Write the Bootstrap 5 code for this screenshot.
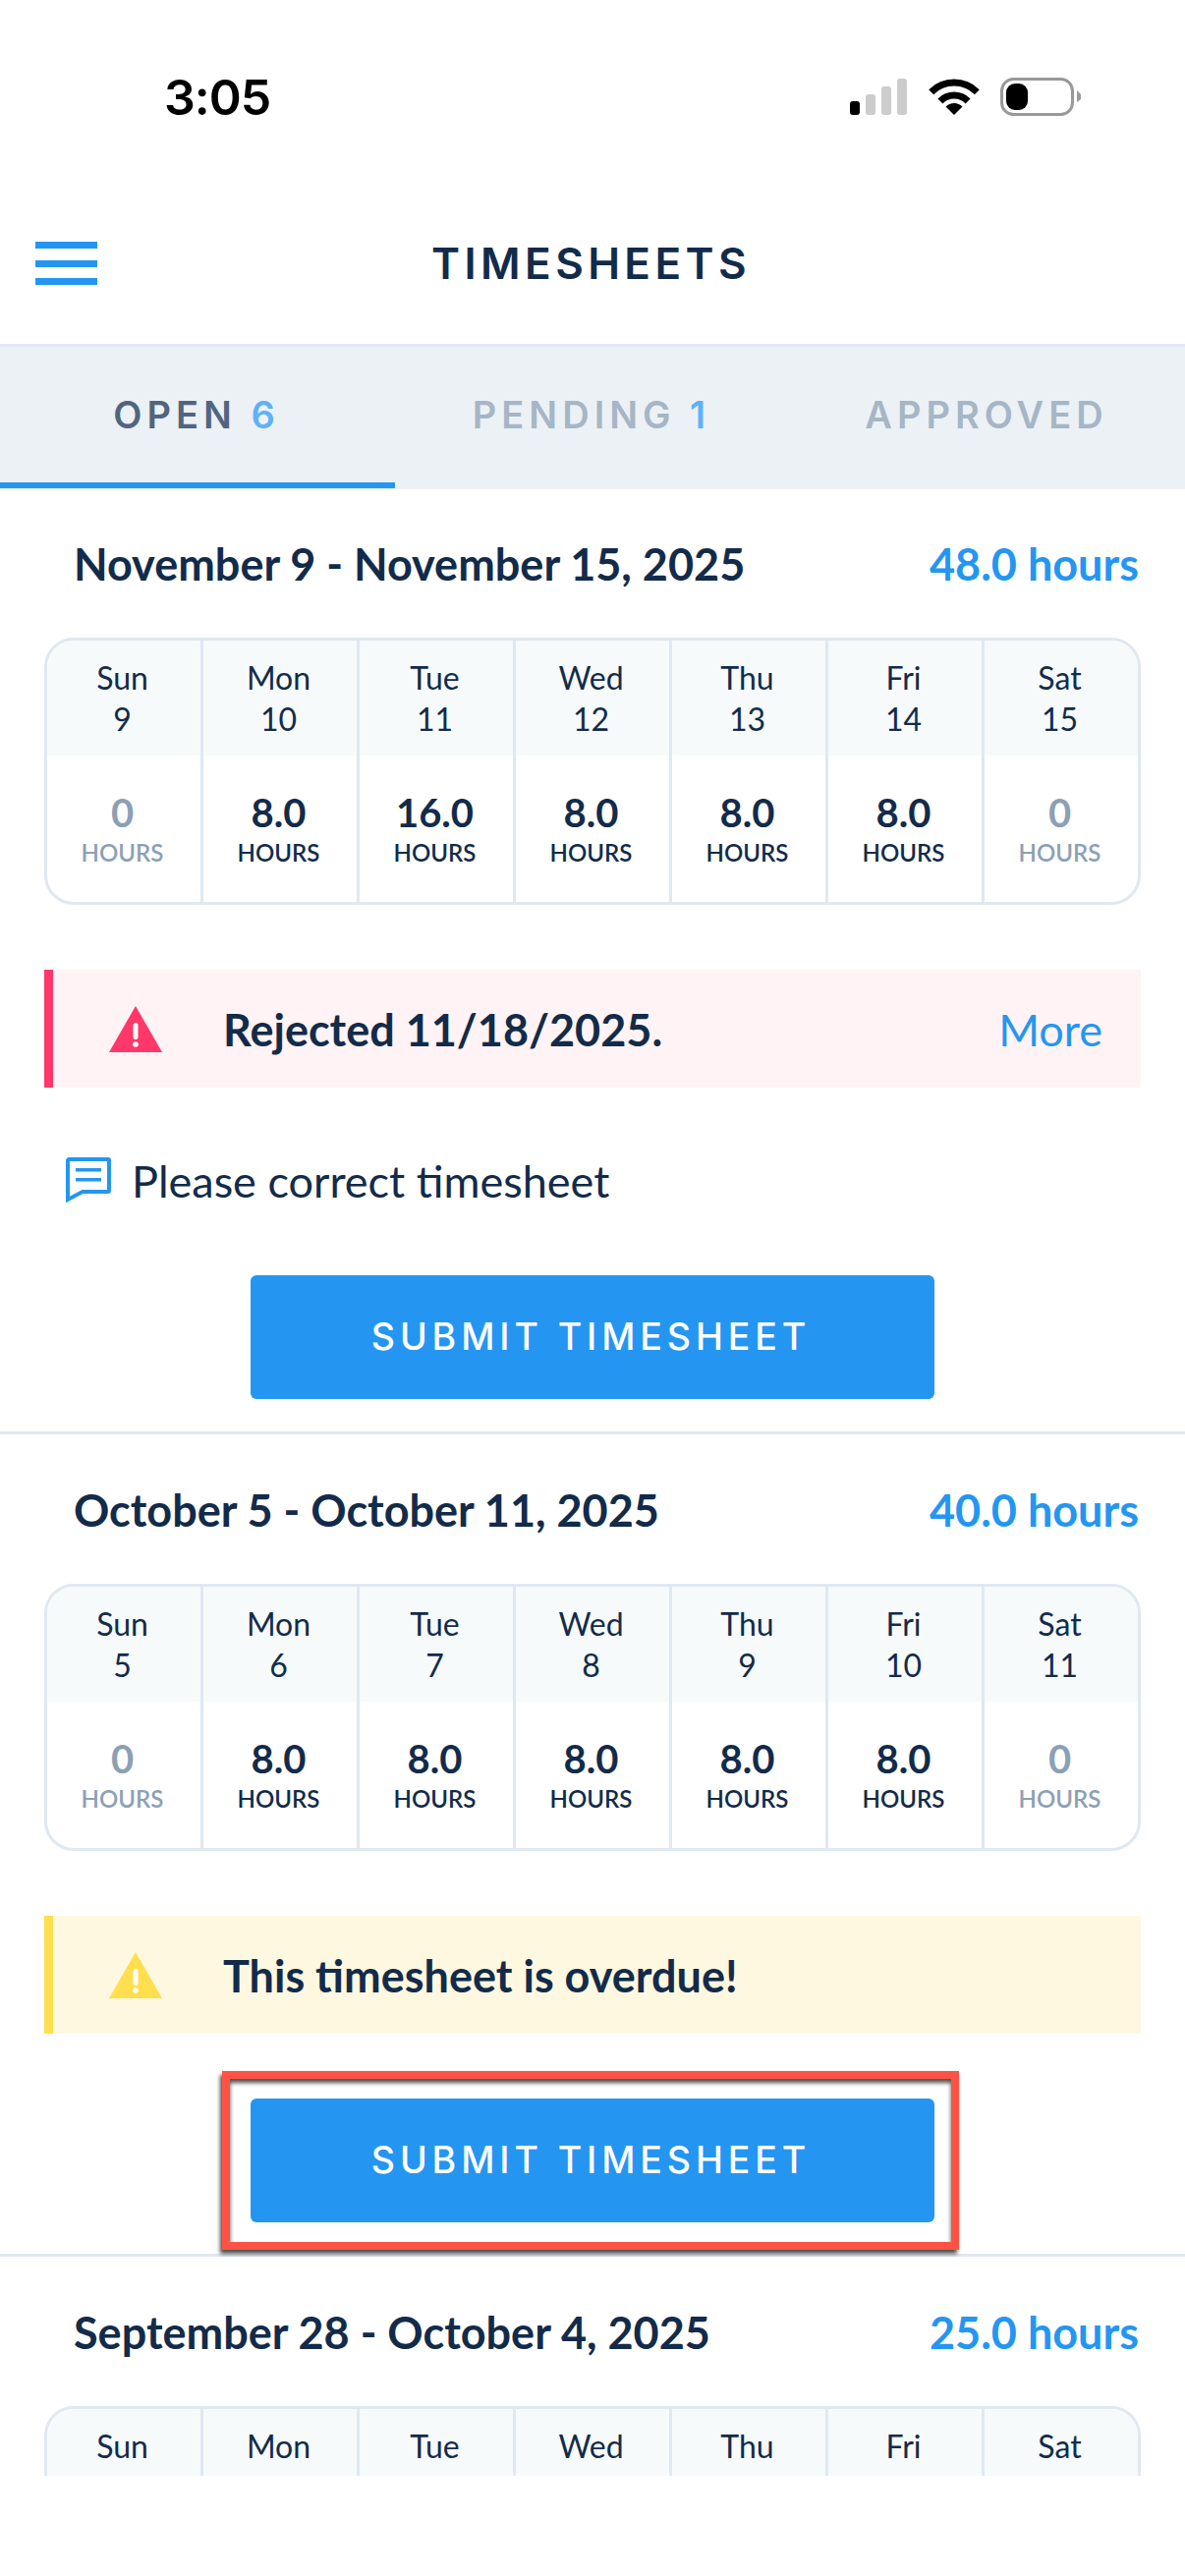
<!DOCTYPE html>
<html lang="en">
<head>
  <meta charset="UTF-8" />
  <meta name="viewport" content="width=device-width, initial-scale=1.0"/>
  <title>Timesheets</title>
  <link href="https://cdn.jsdelivr.net/npm/bootstrap@5.3.0/dist/css/bootstrap.min.css" rel="stylesheet" />
  <style>
    body {
      font-family: "Lato", "Liberation Sans", sans-serif;
      background-color: #fff;
      color: #132b4a;
    }
    .phone-page { width: 1206px; height: 2622px; overflow: hidden; }

    /* status bar */
    .status-bar { height: 200px; padding: 72px 106px 0 167px; }
    .status-time { font-family: "Inter", sans-serif; font-weight: 600; font-size: 50px; line-height: 54px; letter-spacing: -1px; color: #000; }

    /* header */
    .app-header { height: 153px; border-bottom: 3px solid #e0e8f0; padding: 0 0 14px 36px; }
    .hamburger { width: 63px; height: 44px; }
    .hamburger span { display: block; height: 7px; background: #2496f1; }
    .app-title { font-family: "Inter", sans-serif; font-weight: 600; font-size: 44px; letter-spacing: 4.4px; line-height: 1; color: #132b4a; flex: 1; text-align: center; margin-left: -66px; margin-right: 36px; }

    /* tabs */
    .tab-bar { height: 145px; background: #ecf1f5; }
    .tab-item { width: 402px; height: 145px; font-family: "Inter", sans-serif; font-weight: 600; font-size: 38px; letter-spacing: 5px; color: #a6b6c6; padding: 0 2px 6px 0; }
    .tab-item.is-active { color: #52657e; box-shadow: inset 0 -6px 0 #2496f1; height: 144px; }
    .tab-count { color: #5eb2f5; }

    /* week sections */
    .week-block { padding: 50px 45px 33px 45px; border-bottom: 3px solid #e0e8f0; }
    .week-block.first-week { padding-top: 49px; }
    .week-block.middle-week { padding-bottom: 32px; }
    .week-head { height: 56px; margin-bottom: 46px; padding: 0 2px 0 30px; }
    .week-range { font-weight: 700; font-size: 45px; }
    .week-hours { font-weight: 700; font-size: 45px; color: #2496f1; }

    .day-grid { display: grid; grid-template-columns: repeat(6, 159px) 1fr; border: 3px solid #e0e8f0; border-radius: 30px; overflow: hidden; height: 272px; }
    .day-cell { border-right: 3px solid #e0e8f0; }
    .day-cell:last-child { border-right: 0; }
    .day-name { height: 117px; background: #f6fafb; font-size: 32px; line-height: 42px; text-align: center; padding: 17px 3px 0 0; }
    .day-val { height: 149px; text-align: center; padding: 35px 3px 0 0; }
    .day-val b { display: block; font-size: 40px; line-height: 46px; font-weight: 700; }
    .day-val small { display: block; font-size: 24px; line-height: 36px; font-weight: 600; }
    .is-zero { color: #8ba0b5; }

    .note-box { height: 120px; margin-top: 66px; border-left: 9px solid; padding: 0 39px 0 57px; font-size: 45px; font-weight: 700; }
    .note-red { background: #fff3f5; border-color: #ff3869; }
    .note-yellow { background: #fff8e0; border-color: #ffdf4d; }
    .note-text { margin-left: 62px; padding-top: 3px; }
    .note-more { font-weight: 400; color: #2496f1; padding-top: 3px; }

    .comment-row { height: 48px; margin: 70px 0 0 22px; font-size: 45px; }
    .comment-row span { margin-left: 21px; padding-top: 3px; }

    .submit-wrap { width: 696px; margin: 66px auto 0; position: relative; }
    .comment-row + .submit-wrap { margin-top: 73px; }
    .submit-btn { width: 100%; height: 126px; background: #2496f1; border: 0; border-radius: 6px; padding: 0 3px 0 0; color: #fff; font-family: "Inter", sans-serif; font-weight: 500; font-size: 37.5px; letter-spacing: 4.9px; }
    .red-frame { position: absolute; left: -29px; right: -25px; top: -28px; bottom: -28px; border: 8px solid #ff5245; box-shadow: -2px 4px 4px rgba(0,0,0,.7), inset 0 4px 4px rgba(0,0,0,.7); pointer-events: none; }

    .clip-week { height: 223px; overflow: hidden; border-bottom: 0; padding-bottom: 0; }
  </style>
</head>
<body>
<div class="phone-page">

  <!-- Status bar -->
  <div class="status-bar d-flex justify-content-between align-items-start">
    <span class="status-time">3:05</span>
    <svg width="235" height="46" viewBox="0 0 235 46" class="mt-1">
      <rect x="0" y="27" width="10" height="14" rx="3" fill="#000"/>
      <rect x="16" y="20" width="10" height="21" rx="3" fill="#ccc"/>
      <rect x="32" y="12" width="10" height="29" rx="3" fill="#ccc"/>
      <rect x="48" y="4" width="10" height="37" rx="3" fill="#ccc"/>
      <g transform="translate(81,4)">
        <path d="M25 37 L16.5 28.5 A12 12 0 0 1 33.5 28.5 Z" fill="#000"/>
        <path d="M10.9 22.9 A20 20 0 0 1 39.1 22.9" fill="none" stroke="#000" stroke-width="7"/>
        <path d="M1.7 13.7 A33 33 0 0 1 48.3 13.7" fill="none" stroke="#000" stroke-width="7"/>
      </g>
      <rect x="154.5" y="4.5" width="72" height="36" rx="12" fill="none" stroke="#999" stroke-width="3"/>
      <rect x="159" y="9" width="22" height="27" rx="9" fill="#000"/>
      <path d="M231 16 L235 20 V25 L231 28 Z" fill="#999"/>
    </svg>
  </div>

  <!-- Header -->
  <div class="app-header d-flex align-items-center">
    <div class="hamburger d-flex flex-column justify-content-between"><span></span><span></span><span></span></div>
    <div class="app-title">TIMESHEETS</div>
  </div>

  <!-- Tabs -->
  <div class="tab-bar d-flex">
    <div class="tab-item is-active d-flex align-items-center justify-content-center">OPEN&nbsp;<span class="tab-count">6</span></div>
    <div class="tab-item d-flex align-items-center justify-content-center">PENDING&nbsp;<span class="tab-count">1</span></div>
    <div class="tab-item d-flex align-items-center justify-content-center">APPROVED</div>
  </div>

  <!-- Week 1 -->
  <div class="week-block first-week">
    <div class="week-head d-flex justify-content-between align-items-center">
      <span class="week-range">November 9 - November 15, 2025</span>
      <span class="week-hours">48.0 hours</span>
    </div>
    <div class="day-grid">
      <div class="day-cell"><div class="day-name">Sun<br>9</div><div class="day-val is-zero"><b>0</b><small>HOURS</small></div></div>
      <div class="day-cell"><div class="day-name">Mon<br>10</div><div class="day-val"><b>8.0</b><small>HOURS</small></div></div>
      <div class="day-cell"><div class="day-name">Tue<br>11</div><div class="day-val"><b>16.0</b><small>HOURS</small></div></div>
      <div class="day-cell"><div class="day-name">Wed<br>12</div><div class="day-val"><b>8.0</b><small>HOURS</small></div></div>
      <div class="day-cell"><div class="day-name">Thu<br>13</div><div class="day-val"><b>8.0</b><small>HOURS</small></div></div>
      <div class="day-cell"><div class="day-name">Fri<br>14</div><div class="day-val"><b>8.0</b><small>HOURS</small></div></div>
      <div class="day-cell"><div class="day-name">Sat<br>15</div><div class="day-val is-zero"><b>0</b><small>HOURS</small></div></div>
    </div>
    <div class="note-box note-red d-flex align-items-center">
      <svg width="54" height="47" viewBox="0 0 54 47">
        <path d="M27 0 L54 47 H0 Z" fill="#ff3869"/>
        <rect x="24.5" y="17" width="5" height="17" rx="2.5" fill="#fff"/>
        <circle cx="27" cy="39" r="2.8" fill="#fff"/>
      </svg>
      <span class="note-text">Rejected 11/18/2025.</span>
      <span class="note-more ms-auto">More</span>
    </div>
    <div class="comment-row d-flex align-items-center">
      <svg width="46" height="47" viewBox="0 0 46 47">
        <path d="M3 2 H43 a1 1 0 0 1 1 1 V34 a1 1 0 0 1 -1 1 H17 L2 43 V3 Z" fill="none" stroke="#2496f1" stroke-width="4"/>
        <rect x="10" y="11" width="26" height="3.5" fill="#2496f1"/>
        <rect x="10" y="21" width="26" height="3.5" fill="#2496f1"/>
      </svg>
      <span>Please correct timesheet</span>
    </div>
    <div class="submit-wrap">
      <button class="submit-btn">SUBMIT TIMESHEET</button>
    </div>
  </div>

  <!-- Week 2 -->
  <div class="week-block middle-week">
    <div class="week-head d-flex justify-content-between align-items-center">
      <span class="week-range">October 5 - October 11, 2025</span>
      <span class="week-hours">40.0 hours</span>
    </div>
    <div class="day-grid">
      <div class="day-cell"><div class="day-name">Sun<br>5</div><div class="day-val is-zero"><b>0</b><small>HOURS</small></div></div>
      <div class="day-cell"><div class="day-name">Mon<br>6</div><div class="day-val"><b>8.0</b><small>HOURS</small></div></div>
      <div class="day-cell"><div class="day-name">Tue<br>7</div><div class="day-val"><b>8.0</b><small>HOURS</small></div></div>
      <div class="day-cell"><div class="day-name">Wed<br>8</div><div class="day-val"><b>8.0</b><small>HOURS</small></div></div>
      <div class="day-cell"><div class="day-name">Thu<br>9</div><div class="day-val"><b>8.0</b><small>HOURS</small></div></div>
      <div class="day-cell"><div class="day-name">Fri<br>10</div><div class="day-val"><b>8.0</b><small>HOURS</small></div></div>
      <div class="day-cell"><div class="day-name">Sat<br>11</div><div class="day-val is-zero"><b>0</b><small>HOURS</small></div></div>
    </div>
    <div class="note-box note-yellow d-flex align-items-center">
      <svg width="54" height="47" viewBox="0 0 54 47">
        <path d="M27 0 L54 47 H0 Z" fill="#ffdf4d"/>
        <rect x="24.5" y="17" width="5" height="17" rx="2.5" fill="#fff"/>
        <circle cx="27" cy="39" r="2.8" fill="#fff"/>
      </svg>
      <span class="note-text">This timesheet is overdue!</span>
    </div>
    <div class="submit-wrap">
      <button class="submit-btn">SUBMIT TIMESHEET</button>
      <div class="red-frame"></div>
    </div>
  </div>

  <!-- Week 3 -->
  <div class="week-block clip-week">
    <div class="week-head d-flex justify-content-between align-items-center">
      <span class="week-range">September 28 - October 4, 2025</span>
      <span class="week-hours">25.0 hours</span>
    </div>
    <div class="day-grid">
      <div class="day-cell"><div class="day-name">Sun</div></div>
      <div class="day-cell"><div class="day-name">Mon</div></div>
      <div class="day-cell"><div class="day-name">Tue</div></div>
      <div class="day-cell"><div class="day-name">Wed</div></div>
      <div class="day-cell"><div class="day-name">Thu</div></div>
      <div class="day-cell"><div class="day-name">Fri</div></div>
      <div class="day-cell"><div class="day-name">Sat</div></div>
    </div>
  </div>

</div>
<script src="https://cdn.jsdelivr.net/npm/bootstrap@5.3.0/dist/js/bootstrap.bundle.min.js"></script>
</body>
</html>
